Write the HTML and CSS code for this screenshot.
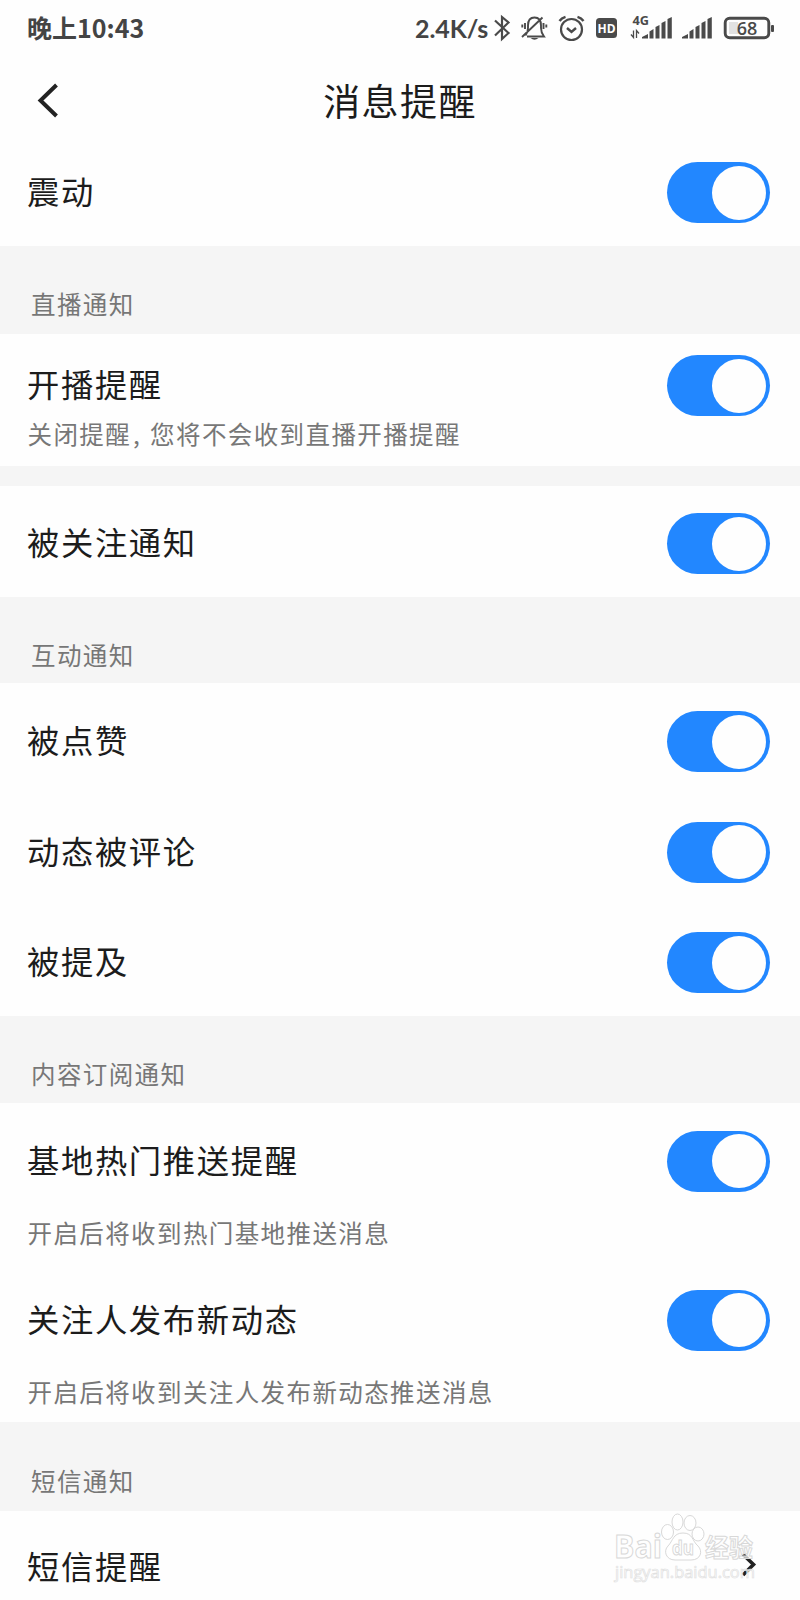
FILE: index.html
```html
<!DOCTYPE html>
<html lang="zh-CN">
<head>
<meta charset="utf-8">
<title>消息提醒</title>
<link rel="stylesheet" href="styles.css">
</head>
<body>
<main class="screen">
  <div class="status">
    <span class="time">晚上10:43</span>
    <div class="status-right">
      <span class="speed">2.4K/s</span>
      <svg class="ico" width="26" height="56" viewBox="490 0 26 56"><path d="M495 20.500 L508.500 33 L502 39 V17 L508.500 22.500 L495 35.500" stroke-width="2.200"/></svg>
      <svg class="ico" width="38" height="56" viewBox="516 0 38 56"><path d="M525.500 35.500 Q528 32.500 528 28 V25.500 Q528 17.500 534.500 17.500 Q541 17.500 541 25.500 V28 Q541 32.500 544 36.500 H527 M522 37 L542.500 17.500 M525 23 V29 M522.300 24.500 V27.500 M543.500 23 V29 M546.300 24.500 V27.500" stroke-width="1.900"/><path class="solid" d="M530.500 38 H538.500 Q534.500 41.500 530.500 38Z"/></svg>
      <svg class="ico" width="36" height="56" viewBox="554 0 36 56"><circle cx="571.500" cy="29.500" r="10.500" stroke-width="2.200"/><path d="M567 28 L571.500 32 L576 28 M559.500 21 Q561.500 18 565.500 16.800 M583.500 21 Q581.500 18 577.500 16.800" stroke-width="2.400"/></svg>
      <svg class="ico" width="34" height="56" viewBox="590 0 34 56"><rect class="solid" x="596" y="18" width="21" height="20" rx="3.500"/><text class="hd" x="606.500" y="32.500" text-anchor="middle">HD</text></svg>
      <svg class="ico" width="54" height="56" viewBox="624 0 54 56"><text class="net" x="632.500" y="24.500" textLength="16.500" lengthAdjust="spacingAndGlyphs">4G</text><path d="M633.500 30.500 V37.500 L631 34.500 M636.500 38 V30.500 L639 33.500" stroke-width="1.300"/><path class="solid" d="M642 38.500 V37 L648 34 V38.500Z M649.500 38.500 V31.500 L653.500 29 V38.500Z M655.500 38.500 V27 L659.500 25 V38.500Z M661.500 38.500 V23 L665.500 21 V38.500Z M667.500 38.500 V19 L671.800 17 V38.500Z"/></svg>
      <svg class="ico" width="40" height="56" viewBox="678 0 40 56"><path class="solid" d="M682 38.500 V37 L688 34 V38.500Z M689.500 38.500 V31.500 L693.500 29 V38.500Z M695.500 38.500 V27 L699.500 25 V38.500Z M701.500 38.500 V23 L705.500 21 V38.500Z M707.500 38.500 V19 L711.800 17 V38.500Z"/></svg>
      <svg class="ico" width="62" height="56" viewBox="718 0 62 56"><rect x="725.200" y="18.200" width="43.600" height="19.600" rx="4.500" stroke-width="2.900"/><rect class="charge" x="729" y="22" width="9" height="12"/><rect class="solid" x="771" y="25" width="3" height="7" rx="1"/><text class="level" x="747" y="34.500" text-anchor="middle">68</text></svg>
    </div>
  </div>

  <header class="bar">
    <svg class="back" width="22" height="36" viewBox="0 0 22 36"><path d="M19.500 2 L3.500 17.500 L19.500 33"/></svg>
    <h1 class="title">消息提醒</h1>
  </header>

  <section class="card vibrate"><div class="row"><span class="label">震动</span><span class="toggle"></span></div></section>

  <h2 class="group g1">直播通知</h2>
  <section class="card live">
    <div class="row"><span class="label">开播提醒</span><span class="toggle"></span></div>
    <p class="hint"><span>关闭提醒</span><span class="comma">,</span><span>您将不会收到直播开播提醒</span></p>
  </section>

  <section class="card followed"><div class="row"><span class="label">被关注通知</span><span class="toggle"></span></div></section>

  <h2 class="group g2">互动通知</h2>
  <section class="card interact">
    <div class="row"><span class="label">被点赞</span><span class="toggle"></span></div>
    <div class="row"><span class="label">动态被评论</span><span class="toggle"></span></div>
    <div class="row"><span class="label">被提及</span><span class="toggle"></span></div>
  </section>

  <h2 class="group g3">内容订阅通知</h2>
  <section class="card subscribe">
    <div class="item">
      <div class="row"><span class="label">基地热门推送提醒</span><span class="toggle"></span></div>
      <p class="hint">开启后将收到热门基地推送消息</p>
    </div>
    <div class="item">
      <div class="row"><span class="label">关注人发布新动态</span><span class="toggle"></span></div>
      <p class="hint">开启后将收到关注人发布新动态推送消息</p>
    </div>
  </section>

  <h2 class="group g4">短信通知</h2>
  <section class="card sms">
    <div class="row"><span class="label">短信提醒</span>
      <svg class="more" width="16" height="26" viewBox="0 0 16 26"><path d="M2 0.500 L12.500 10.500 L2 21"/></svg>
    </div>
  </section>

  <svg class="watermark" width="160" height="90" viewBox="608 1508 160 90">
    <text class="wm-bold" x="614" y="1558" font-size="32" textLength="48" lengthAdjust="spacingAndGlyphs">Bai</text>
    <ellipse cx="667.500" cy="1532" rx="6" ry="7.500"/>
    <ellipse cx="677.500" cy="1522" rx="5.500" ry="8"/>
    <ellipse cx="690" cy="1523" rx="6" ry="7.500"/>
    <ellipse cx="698" cy="1534" rx="6" ry="7"/>
    <path d="M683 1533 C673 1533 673 1541 668 1546 C663 1551 666 1560 675 1560 H691 C701 1560 703 1551 698 1546 C692 1541 693 1533 683 1533Z"/>
    <text class="wm-bold" x="672" y="1555" font-size="19" textLength="22" lengthAdjust="spacingAndGlyphs">du</text>
    <text class="wm-bold" x="705" y="1557" font-size="25" textLength="48" lengthAdjust="spacingAndGlyphs">经验</text>
    <text class="wm-url" x="615" y="1578" font-size="17" textLength="140" lengthAdjust="spacingAndGlyphs">jingyan.baidu.com</text>
  </svg>
</main>
</body>
</html>
```
FILE: styles.css
```css
* { box-sizing: border-box; }
body { margin: 0; background: #fff; }
.screen {
  position: relative;
  width: 800px;
  height: 1600px;
  overflow: hidden;
  background: #f5f5f5;
  color: #1c1c1c;
  font-family: "Noto Sans CJK SC", sans-serif;
}

.status {
  display: flex;
  justify-content: space-between;
  height: 62px;
  padding: 0 20px 0 27px;
  background: #fefefe;
  color: #444;
}
.time { font-size: 25px; font-weight: 700; line-height: 55px; }
.status-right { display: flex; }
.speed {
  width: 75px;
  font: 700 25px/57px Lato, sans-serif;
  letter-spacing: -0.1px;
  white-space: nowrap;
}
.ico { display: block; fill: none; stroke: #4a4a4a; }
.ico .solid { fill: #4a4a4a; stroke: none; }
.ico .charge { fill: #e2e2e2; stroke: none; }
.ico text { fill: #4a4a4a; stroke: none; font-family: "Open Sans", sans-serif; }
.ico .hd { fill: #fff; font-size: 12px; font-weight: 700; }
.ico .net { font-size: 12px; font-weight: 700; }
.ico .level { font-size: 18px; font-weight: 600; }

.bar {
  display: grid;
  grid-template-columns: 1fr auto 1fr;
  align-items: center;
  height: 80px;
  padding: 0 37px;
  background: #fefefe;
}
.back { margin-bottom: 2px; fill: none; stroke: #222; stroke-width: 4; }
.title {
  margin: 0;
  padding-bottom: 3px;
  font-size: 37px;
  font-weight: 400;
  line-height: 77px;
  letter-spacing: 1.4px;
}

.card { background: #fefefe; }
.row {
  display: flex;
  align-items: center;
  justify-content: space-between;
  padding: 0 30px 0 27px;
}
.label { padding-bottom: 5px; font-size: 32.3px; line-height: 40px; letter-spacing: 1.65px; }
.toggle {
  display: flex;
  justify-content: flex-end;
  align-items: center;
  width: 103px;
  height: 61px;
  padding-right: 4px;
  border-radius: 31px;
  background: #2287ff;
}
.toggle::after {
  content: "";
  width: 54px;
  height: 54px;
  border-radius: 50%;
  background: #fefefe;
}
.hint {
  display: flex;
  margin: -1px 0 0;
  padding-left: 27.5px;
  color: #777;
  font-size: 24.5px;
  line-height: 30px;
  letter-spacing: 1.4px;
}
.comma { width: 19px; padding-left: 2px; }
.group {
  margin: 0;
  padding-left: 31px;
  color: #777;
  font-size: 24.5px;
  font-weight: 400;
  letter-spacing: 1.4px;
}
.g1 { height: 88px; line-height: 116px; }
.g2 { height: 86px; line-height: 115px; }
.g3 { height: 87px; line-height: 116px; }
.g4 { height: 89px; line-height: 117px; }

.vibrate { height: 104px; }
.vibrate .row { height: 101px; }
.live { height: 132px; margin-bottom: 20px; }
.live .row { height: 86px; padding-top: 17px; }
.followed { height: 111px; padding-top: 2px; }
.followed .row { height: 111px; }
.interact { height: 333px; padding-top: 3.5px; }
.interact .row { height: 110.5px; }
.subscribe { height: 319px; }
.item { height: 159px; }
.item .row { height: 116px; }
.sms { height: 89px; padding-top: 23px; }
.sms .row { height: 66px; padding-right: 43px; }
.more { fill: none; stroke: #222; stroke-width: 3.6; }

.watermark {
  position: absolute;
  left: 608px;
  top: 1508px;
  fill: #fff;
  fill-opacity: 0.7;
  stroke: #d8d8d8;
  stroke-width: 1;
}
.wm-bold { font-family: "Open Sans", "Noto Sans CJK SC", sans-serif; font-weight: 700; }
.wm-url { font-family: "Open Sans", sans-serif; stroke: #e0e0e0; stroke-width: 0.7; }
```
